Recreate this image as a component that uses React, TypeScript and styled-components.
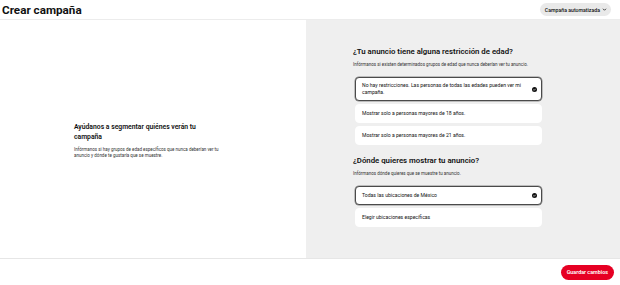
import React from "react";
import styled, { createGlobalStyle } from "styled-components";

// Style

const GlobalStyle = createGlobalStyle`
  html, body {
    margin: 0;
    padding: 0;
    background: #ffffff;
  }
  body {
    font-family: Roboto, "Noto Sans", sans-serif;
    color: #111111;
  }
`;

const Page = styled.div`
  width: 620px;
  height: 285px;
  display: flex;
  flex-direction: column;
`;

const Header = styled.div`
  height: 20px;
  flex-shrink: 0;
  display: flex;
  align-items: center;
  justify-content: space-between;
  padding: 0 9px 0 2px;
  border-bottom: 1px solid #ececec;
  box-sizing: border-box;
`;

const Title = styled.h1`
  margin: 0;
  font-size: 11.7px;
  font-weight: 700;
  color: #111111;
`;

const ModeButton = styled.button`
  display: flex;
  align-items: center;
  gap: 2px;
  height: 13px;
  padding: 0 4px 0 5px;
  border: none;
  border-radius: 7px;
  background: #e9e9e9;
  font-family: inherit;
  font-size: 5.2px;
  font-weight: 500;
  color: #111111;
`;

const Main = styled.div`
  flex: 1;
  display: grid;
  grid-template-columns: 306px 1fr;
`;

const InfoPane = styled.div`
  display: flex;
  align-items: center;
  padding-left: 74px;
`;

const InfoBlock = styled.div`
  width: 150px;
  margin-top: 2px;
`;

const InfoTitle = styled.h2`
  margin: 0 0 5px;
  font-size: 6.8px;
  line-height: 10px;
  font-weight: 600;
  color: #111111;
`;

const SmallText = styled.p`
  margin: 0;
  font-size: 4.5px;
  line-height: 6px;
  color: #333333;
`;

const FormPane = styled.div`
  background: #efefef;
  padding: 27px 0 0 47px;
`;

const Section = styled.section`
  margin-bottom: 11px;
`;

const SectionTitle = styled.h3`
  margin: 0 0 5px;
  font-size: 7.8px;
  line-height: 10px;
  font-weight: 600;
  color: #111111;
`;

const Options = styled.div`
  margin-top: 9px;
  display: flex;
  flex-direction: column;
  gap: 3px;
  width: 187px;
  margin-left: 2px;
`;

const Option = styled.div<{ $selected?: boolean; $tall?: boolean }>`
  display: flex;
  align-items: center;
  justify-content: space-between;
  gap: 4px;
  min-height: ${(p) => (p.$tall ? "24px" : "19px")};
  padding: 3px 4px 3px 6px;
  box-sizing: border-box;
  background: #ffffff;
  border-radius: 4px;
  border: 1px solid ${(p) => (p.$selected ? "#4a4a4a" : "#ffffff")};
  box-shadow: ${(p) => (p.$selected ? "0 0 0 0.5px #8a8a8a" : "none")};
  font-size: 5.1px;
  line-height: 7px;
  color: #111111;
`;

const Footer = styled.div`
  height: 27px;
  flex-shrink: 0;
  display: flex;
  align-items: center;
  justify-content: flex-end;
  padding-right: 6px;
  border-top: 1px solid #e6e6e6;
  box-sizing: border-box;
`;

const SaveButton = styled.button`
  height: 15px;
  padding: 0 6px;
  border: none;
  border-radius: 8px;
  background: #e60023;
  color: #ffffff;
  font-family: inherit;
  font-size: 5.4px;
  font-weight: 600;
`;

// render

const Check = () => (
  <svg width="5" height="5" viewBox="0 0 10 10" style={{ flexShrink: 0 }}>
    <circle cx="5" cy="5" r="5" fill="#111111" />
    <path d="M2.8 5.2 L4.4 6.7 L7.3 3.6" stroke="#ffffff" strokeWidth="1.3" fill="none" />
  </svg>
);

const Chevron = () => (
  <svg width="5" height="5" viewBox="0 0 10 10">
    <path d="M2 3.5 L5 6.5 L8 3.5" stroke="#111111" strokeWidth="1.6" fill="none" />
  </svg>
);

const ageOptions = [
  "No hay restricciones. Las personas de todas las edades pueden ver mi campaña.",
  "Mostrar solo a personas mayores de 18 años.",
  "Mostrar solo a personas mayores de 21 años.",
];

const placeOptions = ["Todas las ubicaciones de México", "Elegir ubicaciones específicas"];

export default function App() {
  return (
    <Page>
      <GlobalStyle />
      <Header>
        <Title>Crear campaña</Title>
        <ModeButton>
          Campaña automatizada <Chevron />
        </ModeButton>
      </Header>
      <Main>
        <InfoPane>
          <InfoBlock>
            <InfoTitle>Ayúdanos a segmentar quiénes verán tu campaña</InfoTitle>
            <SmallText>
              Infórmanos si hay grupos de edad específicos que nunca deberían ver tu anuncio y dónde
              te gustaría que se muestre.
            </SmallText>
          </InfoBlock>
        </InfoPane>
        <FormPane>
          <Section>
            <SectionTitle>¿Tu anuncio tiene alguna restricción de edad?</SectionTitle>
            <SmallText>
              Infórmanos si existen determinados grupos de edad que nunca deberían ver tu anuncio.
            </SmallText>
            <Options>
              {ageOptions.map((text, i) => (
                <Option key={text} $selected={i === 0} $tall={i === 0}>
                  <span>{text}</span>
                  {i === 0 && <Check />}
                </Option>
              ))}
            </Options>
          </Section>
          <Section>
            <SectionTitle>¿Dónde quieres mostrar tu anuncio?</SectionTitle>
            <SmallText>Infórmanos dónde quieres que se muestre tu anuncio.</SmallText>
            <Options>
              {placeOptions.map((text, i) => (
                <Option key={text} $selected={i === 0}>
                  <span>{text}</span>
                  {i === 0 && <Check />}
                </Option>
              ))}
            </Options>
          </Section>
        </FormPane>
      </Main>
      <Footer>
        <SaveButton>Guardar cambios</SaveButton>
      </Footer>
    </Page>
  );
}
